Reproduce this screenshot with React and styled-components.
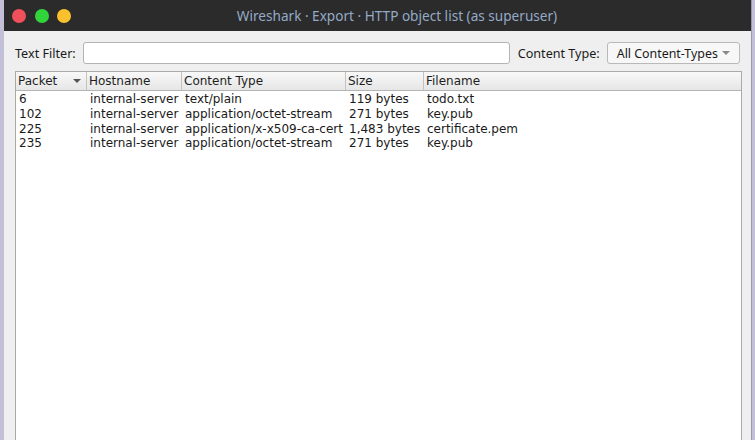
import styled, { createGlobalStyle } from "styled-components";

const GlobalStyle = createGlobalStyle`
    html, body {
        margin: 0;
        padding: 0;
        background: #c3bfd8;
        overflow: hidden;
    }
`;

const rows = [
    { packet: "6", host: "internal-server", type: "text/plain", size: "119 bytes", file: "todo.txt" },
    { packet: "102", host: "internal-server", type: "application/octet-stream", size: "271 bytes", file: "key.pub" },
    { packet: "225", host: "internal-server", type: "application/x-x509-ca-cert", size: "1,483 bytes", file: "certificate.pem" },
    { packet: "235", host: "internal-server", type: "application/octet-stream", size: "271 bytes", file: "key.pub" },
];

const columns = [
    { label: "Packet", width: 71, sort: true },
    { label: "Hostname", width: 95 },
    { label: "Content Type", width: 164 },
    { label: "Size", width: 78 },
    { label: "Filename", width: 319 },
];

const App = () => {
    return (
        <>
            <GlobalStyle />
            <Desktop>
                <Window>
                    <TitleBar>
                        <Lights>
                            <Light color="#f0505a" />
                            <Light color="#32d43c" />
                            <Light color="#fbc02d" />
                        </Lights>
                        <Title>Wireshark · Export · HTTP object list (as superuser)</Title>
                    </TitleBar>
                    <Body>
                        <FilterBar>
                            <Label>Text Filter:</Label>
                            <FilterInput />
                            <Label>Content Type:</Label>
                            <Select>
                                <span>All Content-Types</span>
                                <Caret light />
                            </Select>
                        </FilterBar>
                        <Table>
                            <HeaderRow>
                                {columns.map((c, i) => (
                                    <HeaderCell key={c.label} width={c.width} last={i === columns.length - 1}>
                                        <span>{c.label}</span>
                                        {c.sort && <Caret />}
                                    </HeaderCell>
                                ))}
                            </HeaderRow>
                            <Rows>
                                {rows.map((r) => (
                                    <Row key={r.packet}>
                                        <Cell width={71}>{r.packet}</Cell>
                                        <Cell width={95}>{r.host}</Cell>
                                        <Cell width={164}>{r.type}</Cell>
                                        <Cell width={78}>{r.size}</Cell>
                                        <Cell width={319}>{r.file}</Cell>
                                    </Row>
                                ))}
                            </Rows>
                        </Table>
                    </Body>
                </Window>
            </Desktop>
        </>
    );
}

const Desktop = styled.div`
    width: 755px;
    height: 440px;
    padding-left: 4px;
    box-sizing: border-box;
`;

const Window = styled.div`
    width: 748px;
    height: 440px;
    display: flex;
    flex-direction: column;
    background: #efefef;
    border-right: 1px solid #9a9aa4;
    box-sizing: border-box;
`;

const TitleBar = styled.div`
    height: 31px;
    flex-shrink: 0;
    display: flex;
    align-items: center;
    background: #2b2b2b;
    padding-left: 8px;
    padding-right: 28px;
`;

const Lights = styled.div`
    display: flex;
    gap: 8.5px;
`;

const Light = styled.div`
    width: 14px;
    height: 14px;
    border-radius: 50%;
    background: ${(p) => p.color};
`;

const Title = styled.div`
    flex: 1;
    text-align: center;
    color: #94aac6;
    font-family: "Noto Sans", "Open Sans", sans-serif;
    font-size: 13.6px;
    white-space: nowrap;
`;

const Body = styled.div`
    flex: 1;
    display: flex;
    flex-direction: column;
    padding: 11px 10px 0 11px;
    gap: 7px;
    min-height: 0;
`;

const FilterBar = styled.div`
    display: flex;
    align-items: center;
    height: 22px;
`;

const Label = styled.div`
    font-family: "Noto Sans", "Open Sans", sans-serif;
    font-size: 12.6px;
    color: #1a1a1a;
    margin-right: 7px;
    white-space: nowrap;
`;

const FilterInput = styled.div`
    width: 427px;
    height: 22px;
    box-sizing: border-box;
    background: #ffffff;
    border: 1px solid #b4b4b4;
    border-radius: 3px;
    margin-right: 8px;
`;

const Select = styled.div`
    width: 133px;
    height: 22px;
    box-sizing: border-box;
    display: flex;
    align-items: center;
    justify-content: space-between;
    padding: 0 9px 0 9px;
    background: #f7f7f7;
    border: 1px solid #b9b9b9;
    border-radius: 3px;
    font-family: "Noto Sans", "Open Sans", sans-serif;
    font-size: 12.4px;
    color: #1a1a1a;
    white-space: nowrap;
`;

const Caret = styled.div`
    width: 0;
    height: 0;
    border-left: 4px solid transparent;
    border-right: 4px solid transparent;
    border-top: 4px solid ${(p) => (p.light ? "#8a8a8a" : "#555")};
`;

const Table = styled.div`
    flex: 1;
    width: 727px;
    display: flex;
    flex-direction: column;
    background: #ffffff;
    border: 1px solid #aaaaaa;
    border-bottom: none;
    box-sizing: border-box;
`;

const HeaderRow = styled.div`
    display: flex;
    height: 18px;
    background: linear-gradient(#f8f8f8, #e6e6e6);
    border-bottom: 1px solid #b5b5b5;
`;

const HeaderCell = styled.div`
    width: ${(p) => p.width}px;
    flex-shrink: 0;
    box-sizing: border-box;
    display: flex;
    align-items: center;
    justify-content: space-between;
    padding: 0 5px 0 2px;
    border-right: ${(p) => (p.last ? "none" : "1px solid #c2c2c2")};
    font-family: "DejaVu Sans", sans-serif;
    font-size: 12px;
    color: #1e1e1e;
`;

const Rows = styled.div`
    padding-top: 1px;
`;

const Row = styled.div`
    display: flex;
    height: 14.7px;
    align-items: center;
`;

const Cell = styled.div`
    width: ${(p) => p.width}px;
    flex-shrink: 0;
    box-sizing: border-box;
    padding-left: 3px;
    font-family: "DejaVu Sans", sans-serif;
    font-size: 12px;
    color: #1a1a1a;
    white-space: nowrap;
`;

export default App;
